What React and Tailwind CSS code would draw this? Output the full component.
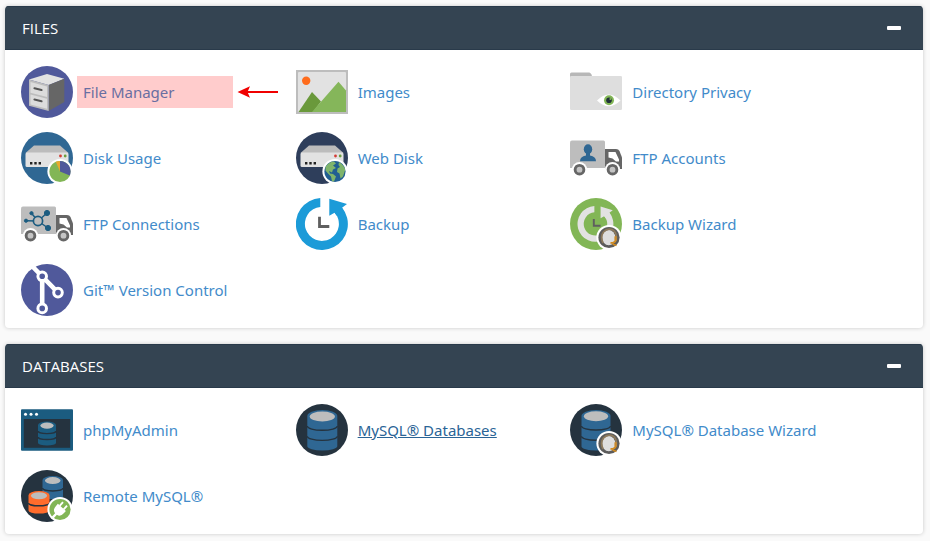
import { useState } from "react";

const GREEN = "#82b656";
const BLUE = "#2f6793";
const DARK = "#25333f";

function Icon({ children }) {
  return (
    <svg viewBox="0 0 52 52" className="size-[52px] shrink-0" aria-hidden="true">
      {children}
    </svg>
  );
}

// white ringed circle at the lower right of an icon
function Badge({ fill, children }) {
  return (
    <g transform="translate(39 39.5)">
      <circle r="12.6" fill="#fff" />
      <circle r="10.6" fill={fill} />
      {children}
    </g>
  );
}

function Cylinder({ x, y, w, h, color, line = DARK, lines = 2 }) {
  const rx = w / 2;
  const ry = w * 0.2;
  const top = y + ry;
  const bottom = y + h - ry * 0.7;
  const step = (bottom - top) / (lines + 1);
  const bands = [];
  for (let i = 1; i <= lines; i++) {
    bands.push(top + step * i);
  }
  return (
    <g>
      <path
        d={`M${x} ${top}A${rx} ${ry} 0 0 1 ${x + w} ${top}V${bottom}A${rx} ${ry * 0.7} 0 0 1 ${x} ${bottom}Z`}
        fill={color}
      />
      {bands.map((b) => (
        <path
          key={b}
          d={`M${x} ${b}A${rx} ${ry * 0.7} 0 0 0 ${x + w} ${b}`}
          fill="none"
          stroke={line}
          strokeWidth="1.4"
        />
      ))}
      <ellipse cx={x + rx} cy={top + 0.5} rx={rx - 2.4} ry={ry * 0.85} fill="#bdbdbd" />
    </g>
  );
}

function Drive() {
  return (
    <g>
      <path d="M13 13.5H39L47.5 21H4.5Z" fill="#bcbcbc" />
      <rect x="4.5" y="20.5" width="43" height="14.5" rx="1.5" fill="#e2e2e2" />
      <path d="M9 30h2.4v2.4H9zM13.3 30h2.4v2.4h-2.4zM17.6 30H20v2.4h-2.4z" fill="#222" />
      <circle cx="39.5" cy="24" r="1.4" fill="#d43c35" />
      <circle cx="44.2" cy="24" r="1.4" fill="#6c9e3e" />
    </g>
  );
}

function Truck({ children }) {
  return (
    <g>
      <path d="M2 8.5H33.5Q35 8.5 35 10V36H0V10.5Q0 8.5 2 8.5Z" fill="#bdbdbd" />
      <path d="M35 17H46Q48.5 17 49.5 19L52 25.5V37H35Z" fill="#666" />
      <path d="M38.5 20H45.5L49 27.5V29.5H46L42.5 26.5L38.5 25.5Z" fill="#fff" />
      {[9.5, 42.5].map((cx) => (
        <g key={cx}>
          <circle cx={cx} cy="37.7" r="7.6" fill="#fff" />
          <circle cx={cx} cy="37.7" r="5.8" fill="#666" />
          <circle cx={cx} cy="37.7" r="2.9" fill="#c4c4c4" />
        </g>
      ))}
      {children}
    </g>
  );
}

function BackupArrow({ color }) {
  return (
    <g>
      <path d="M24.3 0A26 26 0 1 0 46 9.5L38.5 14.5A17 17 0 1 1 24.3 9Z" fill={color} />
      <path d="M33.3 .8L51 6L46 9.8L47.5 12.5L41 18L38.5 14.8L33.3 17.8Z" fill={color} />
      <path d="M23.5 18.8V28.5H33.3" fill="none" stroke="#5f5f5f" strokeWidth="2.8" />
    </g>
  );
}

function WizardBadge() {
  return (
    <Badge fill="#5c5c5c">
      <ellipse cx="-.3" cy=".2" rx="6.6" ry="7.6" fill="#dedede" />
      <path d="M-6 5.5Q-9-1-5.5-5.5Q-2-9.5 3-8Q8.5-5.5 7 3" fill="none" stroke="#8d7a5c" strokeWidth="1.8" />
      <path d="M7 1.5Q7 5.5 1.5 5.5M3.5 6.5L7.5 8" fill="none" stroke="#d08b23" strokeWidth="1.8" />
      <rect x="5.4" y="-1.5" width="2.4" height="4.6" rx="1" fill="#c98a2e" />
    </Badge>
  );
}

function FileManagerIcon() {
  return (
    <Icon>
      <circle cx="26" cy="26" r="26" fill="#50599b" />
      <path d="M8 13.5L26 8L43.3 12.8L27.7 19Z" fill="#e2e2e2" />
      <path d="M27.7 19L43.3 12.8V36L27.7 45Z" fill="#666" />
      <path d="M8 13.5L27.7 19V45L8 39.7Z" fill="#bdbdbd" />
      <path d="M9.5 16L26 20.5V31L9.5 26.8ZM9.5 28.5L26 32.7V42.8L9.5 38.5Z" fill="#dcdcdc" />
      <path d="M13.5 22.3L20.5 24M13.5 33.5L20.5 35.2" stroke="#555" strokeWidth="2.2" strokeLinecap="round" />
    </Icon>
  );
}

function ImagesIcon() {
  return (
    <Icon>
      <rect y="4" width="52" height="44" fill="#bdbdbd" />
      <rect x="2" y="6" width="48" height="40" rx="1" fill="#e2e2e2" />
      <circle cx="10.2" cy="14.8" r="4.2" fill="#ff6c1c" />
      <path d="M2.5 46L16 26L25 35.5L17 46Z" fill="#6a993b" />
      <path d="M16 46L42.5 15.8L50 24.5V46Z" fill="#85b65a" />
    </Icon>
  );
}

function DirectoryPrivacyIcon() {
  return (
    <Icon>
      <path d="M0 8Q0 6.5 1.5 6.5H19Q21 6.5 22 10V13H0Z" fill="#b7b7b7" />
      <rect y="10" width="52" height="34" rx="1.2" fill="#dedede" />
      <path d="M27 34.5Q38.7 22.5 50.5 34.5Q38.7 46 27 34.5Z" fill="#fff" />
      <circle cx="39" cy="34.3" r="5" fill={GREEN} />
      <circle cx="39" cy="34.3" r="2.8" fill="#20303a" />
      <circle cx="40.4" cy="33" r="1" fill={GREEN} />
    </Icon>
  );
}

function DiskUsageIcon() {
  return (
    <Icon>
      <circle cx="26" cy="26" r="26" fill={BLUE} />
      <Drive />
      <Badge fill={GREEN}>
        <path d="M0 0V-10.6A10.6 10.6 0 0 1 9.8 4Z" fill="#50599b" />
        <path d="M0 0L-4.2-9.7A10.6 10.6 0 0 1 0-10.6Z" fill="#e9a92f" />
      </Badge>
    </Icon>
  );
}

function WebDiskIcon() {
  return (
    <Icon>
      <circle cx="26" cy="26" r="26" fill="#2e3e5b" />
      <Drive />
      <Badge fill="#215f92">
        <path d="M-9.5-4.5Q-6-10-1-10L1-8L-2-6L1-3.5L-2-2L-3 1L-6-.5L-5 2L-2 2.5L1 5L-1 10L-3 9.8L-4 5L-7 2L-9.5-1Z" fill="#7fb46b" />
        <path d="M4-9.5Q9.5-6 10.2-1.5L8 5L5.5 7L4.5 2L2 .5L2.5-3L5-4.5L3.5-6.5Z" fill="#7fb46b" />
      </Badge>
    </Icon>
  );
}

function FtpAccountsIcon() {
  return (
    <Icon>
      <Truck>
        <ellipse cx="18" cy="17.3" rx="4.2" ry="5" fill={BLUE} />
        <path d="M16 20H20V23.5Q26 24.5 26 29.2H10Q10 24.5 16 23.5Z" fill={BLUE} />
      </Truck>
    </Icon>
  );
}

function FtpConnectionsIcon() {
  return (
    <Icon>
      <Truck>
        <g fill="#1b5c80" stroke="#1b5c80">
          <path d="M17 23L26 15M17 23L10.5 15.2M17 23L5 22.7M17 23L27 30" strokeWidth="1.5" />
          <circle cx="26" cy="15" r="2.6" />
          <circle cx="10.5" cy="15.2" r="1.6" />
          <circle cx="5" cy="22.7" r="1.6" />
          <circle cx="27" cy="30" r="2.6" />
          <circle cx="17" cy="23" r="4.6" fill="#bdbdbd" strokeWidth="1.7" />
        </g>
      </Truck>
    </Icon>
  );
}

function BackupIcon() {
  return (
    <Icon>
      <BackupArrow color="#1c9bd8" />
    </Icon>
  );
}

function BackupWizardIcon() {
  return (
    <Icon>
      <circle cx="26" cy="26" r="26" fill={GREEN} />
      <g transform="translate(7.6 8) scale(.69)">
        <BackupArrow color="#e2e2e2" />
      </g>
      <WizardBadge />
    </Icon>
  );
}

function GitIcon() {
  const nodes = [
    [21.2, 12.3],
    [37, 28.6],
    [21.2, 44.4],
  ];
  return (
    <Icon>
      <circle cx="26" cy="26" r="26" fill="#50599b" />
      <path d="M12 3L37 28.6M21.2 12V44" stroke="#fff" strokeWidth="4.6" />
      {nodes.map(([x, y]) => (
        <circle key={y} cx={x} cy={y} r="4.3" fill="#50599b" stroke="#fff" strokeWidth="3" />
      ))}
    </Icon>
  );
}

function PhpMyAdminIcon() {
  return (
    <Icon>
      <rect y="5.2" width="52" height="41.5" rx="1" fill="#1b5c80" />
      <rect x="2.8" y="15" width="46.4" height="28.8" fill={DARK} />
      <circle cx="4.5" cy="10.3" r="1.5" fill="#fff" />
      <circle cx="10" cy="10.3" r="1.5" fill="#fff" />
      <circle cx="15.5" cy="10.3" r="1.5" fill="#fff" />
      <Cylinder x={17} y={17.5} w={18} h={24} color="#1b5c80" />
    </Icon>
  );
}

function MysqlIcon() {
  return (
    <Icon>
      <circle cx="26" cy="26" r="26" fill={DARK} />
      <Cylinder x={11.3} y={6} w={30} h={40.5} color={BLUE} />
    </Icon>
  );
}

function MysqlWizardIcon() {
  return (
    <Icon>
      <circle cx="26" cy="26" r="26" fill={DARK} />
      <Cylinder x={11.5} y={6} w={29} h={40.5} color={BLUE} />
      <WizardBadge />
    </Icon>
  );
}

function RemoteMysqlIcon() {
  return (
    <Icon>
      <circle cx="26" cy="26" r="26" fill={DARK} />
      <Cylinder x={21.5} y={6} w={20.5} h={23} color={BLUE} lines={1} />
      <Cylinder x={7.5} y={21} w={21} h={22.5} color="#ff6c2c" lines={1} />
      <Badge fill={GREEN}>
        <g transform="rotate(42)">
          <path d="M-5.4-2.8H5.4V0Q5.4 5.5 1.2 6V11H-1.2V6Q-5.4 5.5-5.4 0Z" fill="#fff" />
          <path d="M-2.7-2.5V-7.5M2.7-2.5V-7.5" stroke="#fff" strokeWidth="1.9" />
        </g>
      </Badge>
    </Icon>
  );
}

const groups = [
  {
    id: "files",
    title: "FILES",
    items: [
      { name: "File Manager", icon: FileManagerIcon, marked: true },
      { name: "Images", icon: ImagesIcon },
      { name: "Directory Privacy", icon: DirectoryPrivacyIcon },
      { name: "Disk Usage", icon: DiskUsageIcon },
      { name: "Web Disk", icon: WebDiskIcon },
      { name: "FTP Accounts", icon: FtpAccountsIcon },
      { name: "FTP Connections", icon: FtpConnectionsIcon },
      { name: "Backup", icon: BackupIcon },
      { name: "Backup Wizard", icon: BackupWizardIcon },
      { name: "Git™ Version Control", icon: GitIcon },
    ],
  },
  {
    id: "databases",
    title: "DATABASES",
    items: [
      { name: "phpMyAdmin", icon: PhpMyAdminIcon },
      { name: "MySQL® Databases", icon: MysqlIcon, active: true },
      { name: "MySQL® Database Wizard", icon: MysqlWizardIcon },
      { name: "Remote MySQL®", icon: RemoteMysqlIcon },
    ],
  },
];

// translucent highlight over the link, with an arrow pointing at it
function Marker() {
  return (
    <span className="pointer-events-none absolute top-1/2 left-14 flex -translate-y-1/2 items-center gap-1">
      <span className="h-8 w-39 bg-[#ff0000]/20" />
      <svg viewBox="0 0 42 12" className="h-3 w-[42px]" aria-hidden="true">
        <path d="M9 6H41" stroke="#f00000" strokeWidth="2" />
        <path d="M.5 6L13 .3L10.5 6L13 11.7Z" fill="#f00000" />
      </svg>
    </span>
  );
}

function Item({ item }) {
  const ItemIcon = item.icon;
  return (
    <li className="relative flex h-[66px] items-center">
      <a
        href={"#" + item.name}
        className={
          item.active
            ? "flex items-center gap-[10px] text-[#2a6496] underline"
            : "flex items-center gap-[10px] text-[#428bca] hover:text-[#2a6496] hover:underline"
        }
      >
        <ItemIcon />
        <span>{item.name}</span>
      </a>
      {item.marked && <Marker />}
    </li>
  );
}

function Panel({ group }) {
  const [open, setOpen] = useState(true);

  return (
    <section className="overflow-hidden rounded bg-white shadow-[0_0_4px_rgba(0,0,0,0.2)]">
      <div className="flex h-11 items-center justify-between border-y border-[#293a4a] bg-[#344452] pr-[22px] pl-[17px]">
        <h2 className="pt-px font-['Open_Sans',sans-serif] text-[15px] text-white">{group.title}</h2>
        <button
          type="button"
          aria-label={"Toggle " + group.title}
          aria-expanded={open}
          aria-controls={group.id}
          onClick={() => setOpen(!open)}
          className="flex h-5 items-center"
        >
          <span className="h-1 w-[14px] rounded-[1px] bg-white" />
        </button>
      </div>
      {open && (
        <ul id={group.id} className="grid grid-cols-[31%_31%_1fr] px-4 pt-[9px] pb-[5px]">
          {group.items.map((item) => (
            <Item key={item.name} item={item} />
          ))}
        </ul>
      )}
    </section>
  );
}

export default function App() {
  return (
    <main className="flex min-h-screen flex-col gap-4 bg-[#fafafa] pt-[6px] pr-[7px] pb-[6px] pl-[5px] font-['Noto_Sans',sans-serif] text-[15px]">
      {groups.map((group) => (
        <Panel key={group.id} group={group} />
      ))}
    </main>
  );
}
